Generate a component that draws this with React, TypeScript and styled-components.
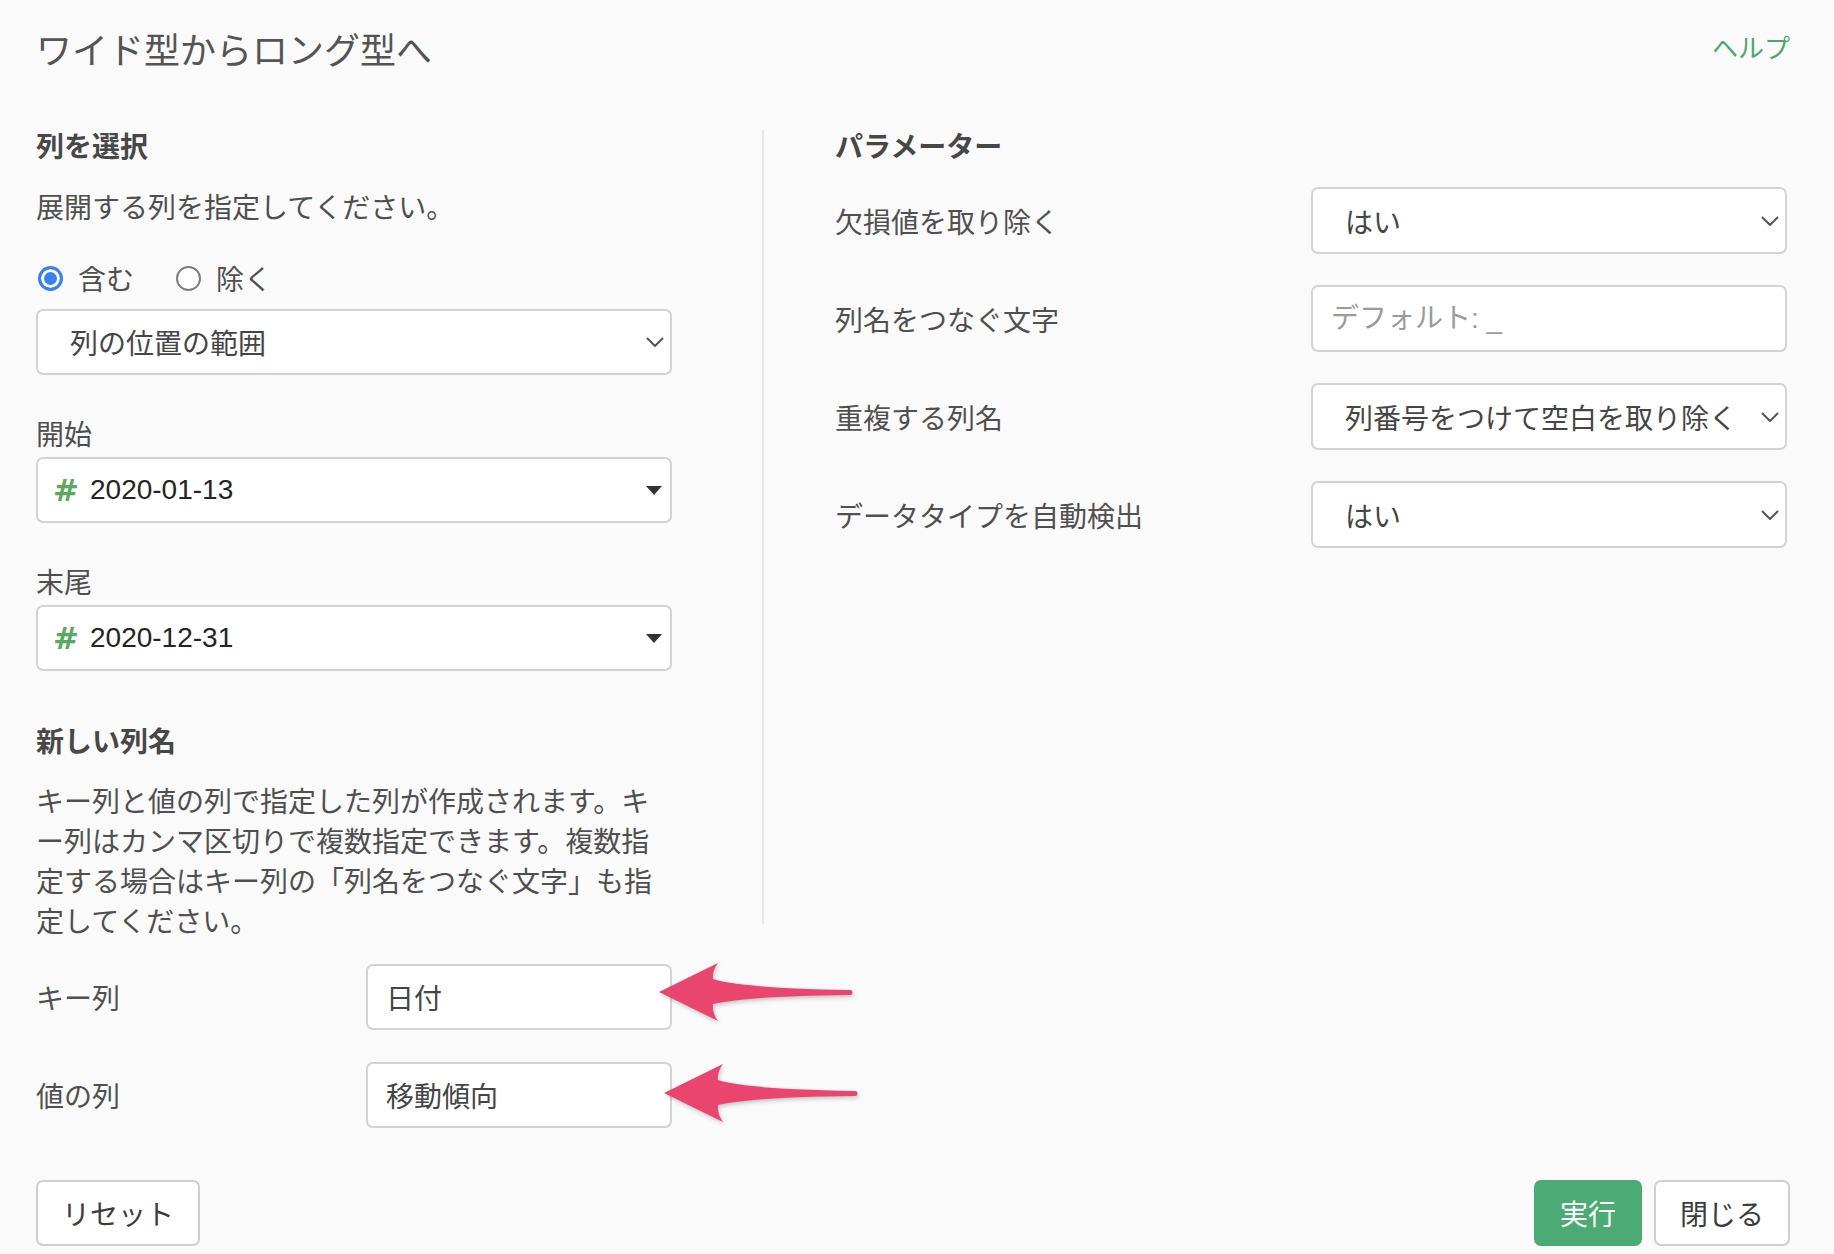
import { FC } from 'react';
import styled, { createGlobalStyle } from 'styled-components';

const GlobalStyle = createGlobalStyle`
  * {
    box-sizing: border-box;
  }

  html,
  body {
    margin: 0;
    padding: 0;
    background-color: #fafafa;
  }

  body {
    font-family: 'Liberation Sans', 'Noto Sans CJK JP', sans-serif;
    color: #4f4f4f;
  }
`;

const Page = styled.div`
  width: 1834px;
  min-height: 1254px;
  padding: 28px 44px 0 36px;
`;

const Header = styled.header`
  display: flex;
  justify-content: space-between;
  align-items: flex-start;
  height: 47px;
`;

const Title = styled.h1`
  margin: 0;
  font-size: 36px;
  font-weight: 400;
  line-height: 47px;
  color: #545454;
`;

const HelpLink = styled.a`
  font-size: 26px;
  line-height: 42px;
  color: #4aa872;
  text-decoration: none;
`;

const Columns = styled.div`
  display: flex;
  margin-top: 55px;
`;

const LeftPane = styled.section`
  width: 728px;
  padding-right: 90px;
  border-right: 2px solid #e7e7e7;
`;

const RightPane = styled.section`
  flex: 1;
  padding-left: 71px;
  padding-right: 3px;
`;

const SectionTitle = styled.h2`
  margin: 0;
  font-size: 28px;
  font-weight: 700;
  line-height: 36px;
  color: #474747;
`;

const Text = styled.p<{ $top: number; $bottom?: number }>`
  margin: ${(p) => p.$top}px 0 ${(p) => p.$bottom ?? 0}px;
  font-size: 28px;
  line-height: 40px;
`;

const Field = styled.div<{ $top: number }>`
  margin-top: ${(p) => p.$top}px;
`;

const FieldLabel = styled.div`
  font-size: 28px;
  line-height: 40px;
  margin-bottom: 1px;
`;

const RadioGroup = styled.div`
  display: flex;
  align-items: center;
  gap: 42px;
  height: 40px;
  margin-top: 29px;
  padding-left: 2px;
`;

const RadioLabel = styled.label`
  display: inline-flex;
  align-items: center;
  gap: 15px;
  font-size: 28px;
  color: #505050;
`;

const RadioInput = styled.input.attrs({ type: 'radio' })`
  appearance: none;
  width: 25px;
  height: 25px;
  margin: 0;
  border-radius: 50%;
  border: 2px solid #7c7c7c;
  background-color: #fff;

  &:checked {
    border: 3px solid #3a7ff6;
    background-color: #3a7ff6;
    box-shadow: inset 0 0 0 3px #fff;
  }
`;

const Control = styled.div`
  display: flex;
  align-items: center;
  height: 66px;
  background-color: #fff;
  border: 2px solid #d3d3d3;
  border-radius: 7px;
`;

const SelectBox = styled(Control)<{ $tall?: boolean }>`
  height: ${(p) => (p.$tall ? 67 : 66)}px;
  justify-content: space-between;
  padding: 0 6px 0 32px;
  font-size: 28px;
  color: #454545;
`;

const ComboBox = styled(Control)`
  padding: 0 8px 0 15px;
  font-size: 28px;
  color: #242424;
`;

const Hash = styled.span`
  font-family: 'DejaVu Sans', sans-serif;
  font-size: 31px;
  font-weight: 700;
  line-height: 1;
  color: #5aa95f;
  margin-right: 11px;
`;

const ComboValue = styled.span`
  flex: 1;
`;

const TextInput = styled.input<{ $tall?: boolean }>`
  width: 100%;
  height: ${(p) => (p.$tall ? 67 : 66)}px;
  padding: 0 18px;
  background-color: #fff;
  border: 2px solid #d3d3d3;
  border-radius: 7px;
  font-family: inherit;
  font-size: 28px;
  color: #454545;
  outline: none;

  &::placeholder {
    color: #9b9b9b;
  }
`;

const ParamRow = styled.div<{ $top: number }>`
  display: grid;
  grid-template-columns: 1fr 476px;
  align-items: center;
  margin-top: ${(p) => p.$top}px;
`;

const ParamLabel = styled.span`
  font-size: 28px;
  color: #505050;
`;

const NameRow = styled.div<{ $top: number }>`
  display: grid;
  grid-template-columns: 330px 306px;
  align-items: center;
  margin-top: ${(p) => p.$top}px;
`;

const InputWrap = styled.div`
  position: relative;
`;

const ArrowMark = styled.svg<{ $left: number; $top: number }>`
  position: absolute;
  left: ${(p) => p.$left}px;
  top: ${(p) => p.$top}px;
  overflow: visible;
  filter: drop-shadow(1px 2px 2px rgba(0, 0, 0, 0.22));
`;

const Footer = styled.footer`
  display: flex;
  justify-content: space-between;
  align-items: center;
  margin-top: 52px;
`;

const ButtonGroup = styled.div`
  display: flex;
  gap: 12px;
`;

const Button = styled.button<{ $primary?: boolean }>`
  height: 66px;
  padding: 0 24px;
  border-radius: 7px;
  border: 2px solid ${(p) => (p.$primary ? '#4caa74' : '#cfcfcf')};
  background-color: ${(p) => (p.$primary ? '#4caa74' : '#fff')};
  color: ${(p) => (p.$primary ? '#fff' : '#3c3c3c')};
  font-family: inherit;
  font-size: 28px;
`;

const Chevron: FC = () => (
  <svg width="18" height="10" viewBox="0 0 18 10">
    <polyline points="1,1 9,9 17,1" fill="none" stroke="#555" strokeWidth="2" />
  </svg>
);

const Caret: FC = () => (
  <svg width="16" height="9" viewBox="0 0 16 9">
    <polygon points="0,0 16,0 8,9" fill="#333" />
  </svg>
);

const Arrow: FC<{ left: number; top: number }> = ({ left, top }) => (
  <ArrowMark $left={left} $top={top} width="200" height="64" viewBox="0 0 200 64">
    <path
      d="M2 31 L61 2 Q55 10 56 18 Q84 27 193 29 A2.5 2.5 0 0 1 193 34 Q92 35 56 43 Q55 52 61 60 Z"
      fill="#ea456e"
    />
  </ArrowMark>
);

const Select: FC<{ value: string; tall?: boolean }> = ({ value, tall }) => (
  <SelectBox $tall={tall}>
    <span>{value}</span>
    <Chevron />
  </SelectBox>
);

const ColumnPicker: FC<{ value: string }> = ({ value }) => (
  <ComboBox>
    <Hash>#</Hash>
    <ComboValue>{value}</ComboValue>
    <Caret />
  </ComboBox>
);

const App: FC = () => (
  <>
    <GlobalStyle />
    <Page>
      <Header>
        <Title>ワイド型からロング型へ</Title>
        <HelpLink href="#">ヘルプ</HelpLink>
      </Header>

      <Columns>
        <LeftPane>
          <SectionTitle>列を選択</SectionTitle>
          <Text $top={23}>展開する列を指定してください。</Text>
          <RadioGroup>
            <RadioLabel>
              <RadioInput name="mode" defaultChecked />
              含む
            </RadioLabel>
            <RadioLabel>
              <RadioInput name="mode" />
              除く
            </RadioLabel>
          </RadioGroup>
          <Field $top={11}>
            <Select value="列の位置の範囲" />
          </Field>
          <Field $top={41}>
            <FieldLabel>開始</FieldLabel>
            <ColumnPicker value="2020-01-13" />
          </Field>
          <Field $top={41}>
            <FieldLabel>末尾</FieldLabel>
            <ColumnPicker value="2020-12-31" />
          </Field>
          <Field $top={54}>
            <SectionTitle>新しい列名</SectionTitle>
          </Field>
          <Text $top={22} $bottom={-19}>
            キー列と値の列で指定した列が作成されます。キ
            <br />
            ー列はカンマ区切りで複数指定できます。複数指
            <br />
            定する場合はキー列の「列名をつなぐ文字」も指
            <br />
            定してください。
          </Text>
        </LeftPane>

        <RightPane>
          <SectionTitle>パラメーター</SectionTitle>
          <ParamRow $top={21}>
            <ParamLabel>欠損値を取り除く</ParamLabel>
            <Select value="はい" tall />
          </ParamRow>
          <ParamRow $top={31}>
            <ParamLabel>列名をつなぐ文字</ParamLabel>
            <TextInput placeholder="デフォルト: _" $tall />
          </ParamRow>
          <ParamRow $top={31}>
            <ParamLabel>重複する列名</ParamLabel>
            <Select value="列番号をつけて空白を取り除く" tall />
          </ParamRow>
          <ParamRow $top={31}>
            <ParamLabel>データタイプを自動検出</ParamLabel>
            <Select value="はい" tall />
          </ParamRow>
        </RightPane>
      </Columns>

      <NameRow $top={40}>
        <ParamLabel>キー列</ParamLabel>
        <InputWrap>
          <TextInput defaultValue="日付" />
          <Arrow left={291} top={-3} />
        </InputWrap>
      </NameRow>
      <NameRow $top={32}>
        <ParamLabel>値の列</ParamLabel>
        <InputWrap>
          <TextInput defaultValue="移動傾向" />
          <Arrow left={296} top={0} />
        </InputWrap>
      </NameRow>

      <Footer>
        <Button>リセット</Button>
        <ButtonGroup>
          <Button $primary>実行</Button>
          <Button>閉じる</Button>
        </ButtonGroup>
      </Footer>
    </Page>
  </>
);

export default App;
